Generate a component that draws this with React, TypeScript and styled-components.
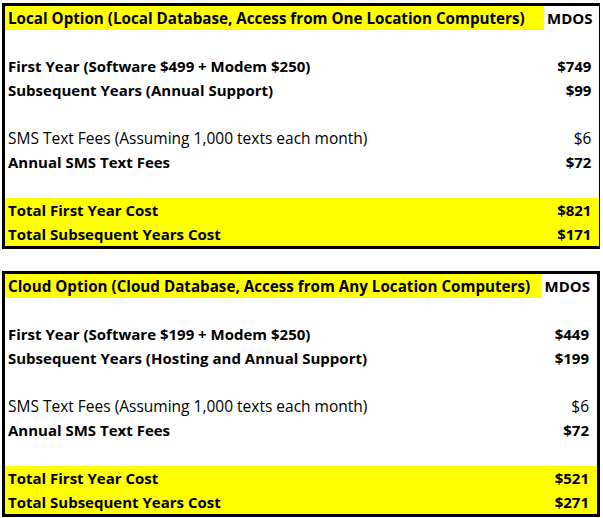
import React from "react";
import styled, { createGlobalStyle } from "styled-components";

type Row = { label: string; value: string; bold?: boolean; total?: boolean } | null;

const localRows: Row[] = [
  null,
  { label: "First Year (Software $499 + Modem $250)", value: "$749", bold: true },
  { label: "Subsequent Years (Annual Support)", value: "$99", bold: true },
  null,
  { label: "SMS Text Fees (Assuming 1,000 texts each month)", value: "$6" },
  { label: "Annual SMS Text Fees", value: "$72", bold: true },
  null,
  { label: "Total First Year Cost", value: "$821", bold: true, total: true },
  { label: "Total Subsequent Years Cost", value: "$171", bold: true, total: true },
];

const cloudRows: Row[] = [
  null,
  { label: "First Year (Software $199 + Modem $250)", value: "$449", bold: true },
  { label: "Subsequent Years (Hosting and Annual Support)", value: "$199", bold: true },
  null,
  { label: "SMS Text Fees (Assuming 1,000 texts each month)", value: "$6" },
  { label: "Annual SMS Text Fees", value: "$72", bold: true },
  null,
  { label: "Total First Year Cost", value: "$521", bold: true, total: true },
  { label: "Total Subsequent Years Cost", value: "$271", bold: true, total: true },
];

function CostTable({ title, labelWidth, rows }: { title: string; labelWidth: number; rows: Row[] }) {
  return (
    <Table $labelWidth={labelWidth}>
      <HeaderCell>{title}</HeaderCell>
      <MdosCell>MDOS</MdosCell>
      {rows.map((r, i) =>
        r ? (
          <React.Fragment key={i}>
            <Cell $bold={r.bold} $total={r.total}>{r.label}</Cell>
            <ValueCell $bold={r.bold} $total={r.total}>{r.value}</ValueCell>
          </React.Fragment>
        ) : (
          <React.Fragment key={i}>
            <Cell />
            <ValueCell />
          </React.Fragment>
        )
      )}
    </Table>
  );
}

export default function App() {
  return (
    <>
      <GlobalStyle />
      <Page>
        <CostTable
          title="Local Option (Local Database, Access from One Location Computers)"
          labelWidth={539}
          rows={localRows}
        />
        <CostTable
          title="Cloud Option (Cloud Database, Access from Any Location Computers)"
          labelWidth={536}
          rows={cloudRows}
        />
      </Page>
    </>
  );
}

const GlobalStyle = createGlobalStyle`
  body {
    margin: 0;
    background: #fff;
    font-family: "Open Sans", "Liberation Sans", sans-serif;
    color: #000;
  }
`;

const Page = styled.div`
  display: flex;
  flex-direction: column;
  gap: 22px;
  padding: 3px 0 0 2px;
  width: 598px;
`;

const Table = styled.div<{ $labelWidth: number }>`
  display: grid;
  grid-template-columns: ${(p) => p.$labelWidth}px 1fr;
  grid-auto-rows: 24px;
  border: 3px solid #000;
`;

const Cell = styled.div<{ $bold?: boolean; $total?: boolean }>`
  display: flex;
  align-items: center;
  padding-left: 3px;
  font-size: ${(p) => (p.$bold ? "15px" : "15.5px")};
  font-weight: ${(p) => (p.$bold ? 700 : 400)};
  background: ${(p) => (p.$total ? "#ffff00" : "#fff")};
  white-space: nowrap;
`;

const HeaderCell = styled(Cell)`
  background: #ffff00;
  font-size: 15.2px;
  font-weight: 700;
`;

const ValueCell = styled(Cell)`
  justify-content: flex-end;
  padding-left: 0;
  padding-right: 8px;
`;

const MdosCell = styled(Cell)`
  justify-content: flex-end;
  padding-right: 7px;
  font-size: 15px;
  font-weight: 700;
`;
